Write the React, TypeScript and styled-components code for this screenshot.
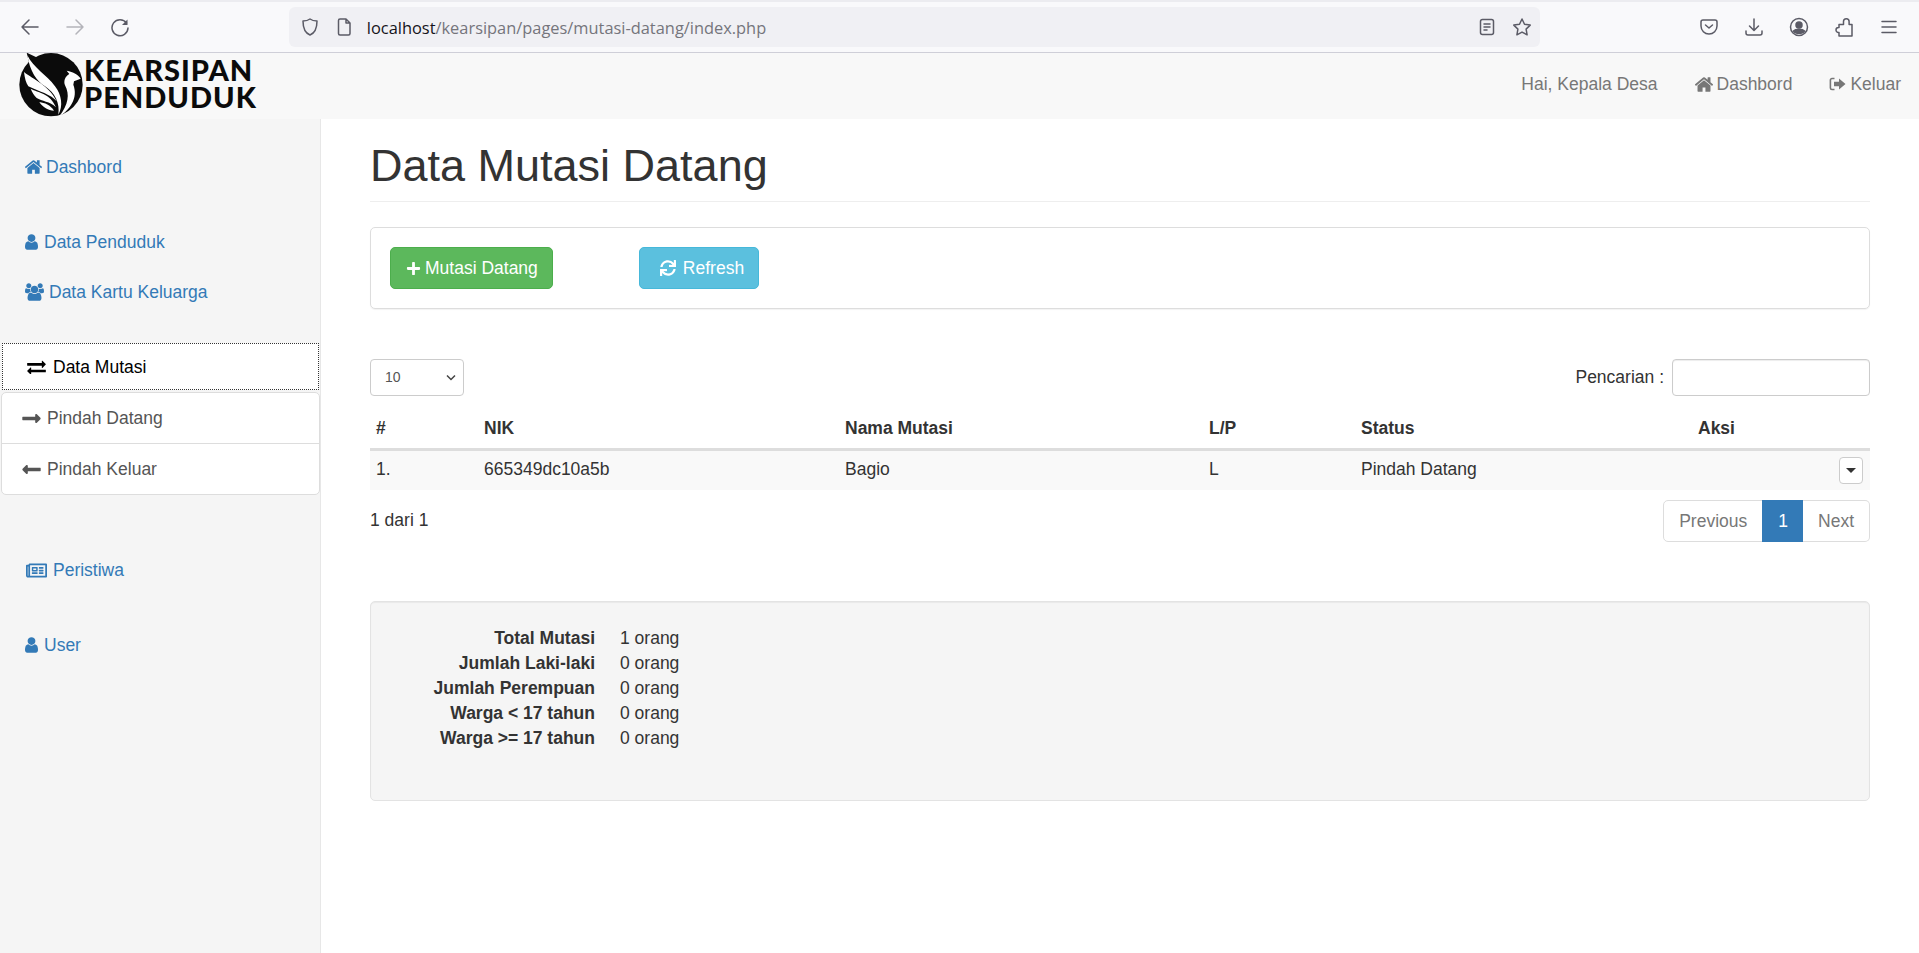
import React from "react";
import styled, { createGlobalStyle } from "styled-components";
import {
  FaLongArrowAltRight,
  FaLongArrowAltLeft,
  FaRegNewspaper,
  FaPlus,
  FaSync,
} from "react-icons/fa";

const GlobalStyle = createGlobalStyle`
  html, body {
    margin: 0;
    padding: 0;
    background: #fff;
    color: #333;
    font-family: "Liberation Sans", Arial, sans-serif;
    font-size: 17.5px;
    line-height: 25px;
  }
  * { box-sizing: border-box; }
`;

const Page = styled.div`
  width: 1919px;
  height: 953px;
  display: flex;
  flex-direction: column;
  overflow: hidden;
`;

/* browser chrome */
const Chrome = styled.div`
  height: 53px;
  flex: none;
  display: flex;
  align-items: center;
  background: #f9f9fb;
  border-top: 2px solid #ececf0;
  border-bottom: 1px solid #cfcfd8;
  padding: 0 20px 0 20px;
  color: #5b5b66;
`;

const ChromeIcon = styled.svg<{ $dim?: boolean }>`
  width: 20px;
  height: 20px;
  fill: none;
  stroke: ${(p) => (p.$dim ? "#b4b4ba" : "#5b5b66")};
  stroke-width: 1.5;
  stroke-linecap: round;
  stroke-linejoin: round;
  flex: none;
`;

const ChromeNav = styled.div`
  display: flex;
  gap: 25px;
  width: 269px;
`;

const UrlBar = styled.div`
  width: 1252px;
  height: 40px;
  background: #f0f0f4;
  border-radius: 6px;
  display: flex;
  align-items: center;
  gap: 15px;
  padding: 0 8px 0 11px;
`;

const UrlText = styled.div`
  margin-left: -3px;
  flex: 1;
  font-family: "Open Sans", sans-serif;
  font-size: 16.4px;
  white-space: nowrap;
  color: #15141a;
  span {
    color: #75757c;
  }
`;

const UrlIcons = styled.div`
  display: flex;
  gap: 15px;
`;

const ChromeRight = styled.div`
  margin-left: 159px;
  display: flex;
  gap: 25px;
`;

/* navbar */
const NavBar = styled.div`
  height: 66px;
  flex: none;
  display: flex;
  align-items: center;
  background: #f8f8f8;
  padding: 0 18px;
`;

const Logo = styled.div`
  display: flex;
  align-items: center;
  margin-right: auto;
`;

const LogoText = styled.div`
  font-family: "Lato", sans-serif;
  font-weight: 900;
  font-size: 29px;
  line-height: 27px;
  letter-spacing: 1px;
  margin-bottom: 6px;
  color: #0b0b0b;
`;

const NavItem = styled.div`
  display: flex;
  align-items: center;
  gap: 4px;
  color: #777;
  margin: 0 0 4px 37px;
`;

/* sidebar + content */
const Body = styled.div`
  flex: 1;
  display: flex;
  min-height: 0;
`;

const Sidebar = styled.div`
  width: 321px;
  flex: none;
  background: #f5f5f5;
  border-right: 1px solid #e7e7e7;
  padding-top: 23px;
`;

const SideGroup = styled.div<{ $gap: number }>`
  margin-bottom: ${(p) => p.$gap}px;
`;

const SideLink = styled.a<{ $gap?: number; $pad?: number }>`
  height: 50px;
  display: flex;
  align-items: center;
  gap: ${(p) => p.$gap ?? 4}px;
  padding-left: ${(p) => p.$pad ?? 25}px;
  color: #337ab7;
  svg {
    flex: none;
  }
`;

const ActiveLink = styled.a`
  height: 47px;
  margin: 0 1px 2px 2px;
  padding: 1px 0 0 24px;
  display: flex;
  align-items: center;
  gap: 7px;
  background: #fff;
  color: #000;
  border: 1px dotted #333;
`;

const SubPanel = styled.div`
  margin: 0 0 0 1px;
  background: #fff;
  border: 1px solid #ddd;
  border-radius: 5px;
`;

const SubLink = styled.a`
  height: 50px;
  display: flex;
  align-items: center;
  gap: 5px;
  padding-left: 19px;
  color: #555;
  & + & {
    border-top: 1px solid #ddd;
    height: 51px;
  }
`;

const Main = styled.div`
  flex: 1;
  padding: 22px 50px 0 49px;
`;

const Title = styled.h1`
  margin: 0;
  font-size: 45px;
  font-weight: 500;
  line-height: 50px;
  padding-bottom: 10px;
  border-bottom: 1px solid #eee;
`;

const ActionCard = styled.div`
  margin-top: 25px;
  height: 82px;
  border: 1px solid #ddd;
  border-radius: 5px;
  padding: 19px;
  display: flex;
  gap: 86px;
  box-shadow: 0 1px 1px rgba(0, 0, 0, 0.05);
`;

const Button = styled.a<{ $bg: string; $line: string; $gap: number }>`
  height: 42px;
  padding: 0 14px 0 15px;
  display: flex;
  align-items: center;
  gap: ${(p) => p.$gap}px;
  color: #fff;
  background: ${(p) => p.$bg};
  border: 1px solid ${(p) => p.$line};
  border-radius: 5px;
`;

const Controls = styled.div`
  margin-top: 50px;
  height: 37px;
  display: flex;
  align-items: center;
  justify-content: space-between;
`;

const PageSize = styled.div`
  width: 94px;
  height: 37px;
  border: 1px solid #ccc;
  border-radius: 4px;
  display: flex;
  align-items: center;
  justify-content: space-between;
  padding: 0 7px 0 14px;
  font-size: 14px;
  color: #555;
  svg {
    width: 10px;
    height: 7px;
  }
`;

const Search = styled.div`
  display: flex;
  align-items: center;
  gap: 8px;
`;

const SearchBox = styled.div`
  width: 198px;
  height: 37px;
  border: 1px solid #ccc;
  border-radius: 4px;
  box-shadow: inset 0 1px 1px rgba(0, 0, 0, 0.075);
`;

const Table = styled.table`
  width: 100%;
  table-layout: fixed;
  border-collapse: separate;
  border-spacing: 0;
`;

const Th = styled.th<{ $w: number }>`
  width: ${(p) => p.$w}px;
  height: 55px;
  padding: 12px 6px 0;
  text-align: left;
  font-weight: 700;
  border-bottom: 3px solid #ddd;
`;

const Row = styled.tr`
  background: #f9f9f9;
`;

const Td = styled.td`
  height: 39px;
  padding: 0 6px;
  vertical-align: top;
  line-height: 36px;
`;

const Caret = styled.div`
  width: 24px;
  height: 27px;
  margin: 6px 1px 0 auto;
  background: #fff;
  border: 1px solid #ccc;
  border-radius: 4px;
  display: flex;
  align-items: center;
  justify-content: center;
  &::after {
    content: "";
    border-top: 5px solid #333;
    border-left: 5px solid transparent;
    border-right: 5px solid transparent;
  }
`;

const TableFooter = styled.div`
  margin-top: 10px;
  display: flex;
  align-items: center;
  justify-content: space-between;
`;

const PageCount = styled.div`
  padding-bottom: 2px;
`;

const Pager = styled.div`
  display: flex;
  height: 42px;
`;

const PageLink = styled.a<{ $active?: boolean }>`
  display: flex;
  align-items: center;
  padding: 0 15px;
  color: ${(p) => (p.$active ? "#fff" : "#777")};
  background: ${(p) => (p.$active ? "#337ab7" : "#fff")};
  border: 1px solid ${(p) => (p.$active ? "#337ab7" : "#ddd")};
  &:first-child {
    border-radius: 5px 0 0 5px;
  }
  &:last-child {
    border-radius: 0 5px 5px 0;
    border-left: 0;
  }
  & + & {
    margin-left: -1px;
  }
`;

const Well = styled.div`
  margin-top: 59px;
  height: 200px;
  background: #f5f5f5;
  border: 1px solid #e3e3e3;
  border-radius: 5px;
  box-shadow: inset 0 1px 1px rgba(0, 0, 0, 0.05);
  padding: 24px 0 0;
  display: grid;
  grid-template-columns: 224px auto;
  grid-auto-rows: 25px;
  column-gap: 25px;
  justify-content: start;
`;

const WellLabel = styled.div`
  font-weight: 700;
  text-align: right;
`;

const WellValue = styled.div``;

const stats = [
  ["Total Mutasi", "1 orang"],
  ["Jumlah Laki-laki", "0 orang"],
  ["Jumlah Perempuan", "0 orang"],
  ["Warga < 17 tahun", "0 orang"],
  ["Warga >= 17 tahun", "0 orang"],
];

/* font awesome 4 shapes */
const HOME = "M1472 992v480q0 26-19 45t-45 19h-384v-384h-256v384h-384q-26 0-45-19t-19-45v-480q0-1 .5-3t.5-3l575-474 575 474q1 2 1 6zm223-69l-62 74q-8 9-21 11h-3q-13 0-21-7l-692-577-692 577q-12 8-24 7-13-2-21-11l-62-74q-8-10-7-23.5t11-20.5l719-599q32-26 76-26t76 26l244 204v-195q0-14 9-23t23-9h192q14 0 23 9t9 23v408l219 182q10 8 11 21.5t-7 23.5z";
const USER = "M1536 1399q0 109-62.5 187t-150.5 78h-854q-88 0-150.5-78t-62.5-187q0-85 8.500-160.5t31.5-152 58.5-131 94-89 134.5-34.5q131 128 313 128t313-128q76 0 134.5 34.5t94 89 58.5 131 31.5 152 8.500 160.5zm-256-887q0 159-112.5 271.5t-271.5 112.5-271.5-112.5-112.5-271.5 112.5-271.5 271.5-112.5 271.5 112.5 112.5 271.500z";
const USERS = "M593 896q-162 5-265 128h-134q-82 0-138-40.5t-56-118.5q0-353 124-353 6 0 43.5 21t97.5 42.5 119 21.5q67 0 133-23-5 37-5 66 0 139 81 256zm1071 637q0 120-73 189.5t-194 69.5h-874q-121 0-194-69.5t-73-189.5q0-53 3.5-103.5t14-109 26.5-108.5 43-97.5 62-81 85.5-53.5 111.5-20q10 0 43 21.5t73 48 107 48 135 21.5 135-21.5 107-48 73-48 43-21.5q61 0 111.5 20t85.5 53.5 62 81 43 97.5 26.5 108.5 14 109 3.5 103.5zm-1024-1277q0 106-75 181t-181 75-181-75-75-181 75-181 181-75 181 75 75 181zm704 384q0 159-112.5 271.5t-271.5 112.5-271.5-112.5-112.5-271.5 112.5-271.5 271.5-112.5 271.5 112.5 112.5 271.5zm576 225q0 78-56 118.5t-138 40.5h-134q-103-123-265-128 81-117 81-256 0-29-5-66 66 23 133 23 59 0 119-21.5t97.5-42.5 43.5-21q124 0 124 353zm-128-609q0 106-75 181t-181 75-181-75-75-181 75-181 181-75 181 75 75 181z";
const EXCHANGE = "M1792 1184v192q0 13-9.5 22.5t-22.5 9.5h-1376v192q0 13-9.5 22.5t-22.5 9.5q-12 0-24-10l-319-320q-9-9-9-22 0-14 9-23l320-320q9-9 23-9 13 0 22.5 9.5t9.5 22.5v192h1376q13 0 22.5 9.5t9.5 22.5zm0-544q0 14-9 23l-320 320q-9 9-23 9-13 0-22.5-9.5t-9.5-22.5v-192h-1376q-13 0-22.5-9.5t-9.5-22.5v-192q0-13 9.5-22.5t22.5-9.5h1376v-192q0-14 9-23t23-9q12 0 24 10l319 319q9 9 9 23z";

const FaShape = ({ d, box, w, h }: { d: string; box: string; w: number; h: number }) => (
  <svg width={w} height={h} viewBox={box} fill="currentColor"><path d={d} /></svg>
);

const Phoenix = () => (
  <svg width="66" height="66" viewBox="24 15 198 198">
    <circle cx="123" cy="110" r="95" fill="#0b0b0b" />
    <path d="M50 14 L84 30 L58 48Z" fill="#0b0b0b" />
    <path d="M52 22C70 60 110 80 135 115C155 140 160 175 145 200C150 165 135 135 105 115C80 100 60 70 52 22Z" fill="#fff" />
    <path d="M42 72C70 95 115 110 140 160C125 140 85 130 55 115C48 105 44 90 42 72Z" fill="#fff" />
    <path d="M62 122C85 135 120 135 138 178C120 160 95 160 80 150C72 142 66 132 62 122Z" fill="#fff" />
    <path d="M88 162C105 165 120 170 132 188C115 188 98 178 88 162Z" fill="#fff" />
    <path d="M148 205C180 185 205 150 190 110L192 100L212 92C205 80 190 72 170 68L178 78C165 85 160 100 165 112C180 140 175 170 148 205Z" fill="#fff" />
  </svg>
);

const SignOut = () => (
  <svg width="17" height="16" viewBox="0 0 17 16" fill="none">
    <path d="M5.500 2.500H3a1.600 1.600 0 0 0-1.600 1.600v7.800A1.600 1.600 0 0 0 3 13.500h2.500" stroke="#777" strokeWidth="1.600" />
    <path d="M10 2.500 16.500 8 10 13.500V10.300H5V5.700h5Z" fill="#777" />
  </svg>
);

const App = () => (
  <Page>
    <GlobalStyle />
    <Chrome>
      <ChromeNav>
        <ChromeIcon viewBox="0 0 20 20"><path d="M18 10H2M9 3l-7 7 7 7" /></ChromeIcon>
        <ChromeIcon viewBox="0 0 20 20" $dim><path d="M2 10h16M11 3l7 7-7 7" /></ChromeIcon>
        <ChromeIcon viewBox="0 0 20 20">
          <path d="M16.500 6A8 8 0 1 0 18 11" />
          <path d="M17.500 2.500V8H12Z" fill="#5b5b66" stroke="none" />
        </ChromeIcon>
      </ChromeNav>
      <UrlBar>
        <ChromeIcon viewBox="0 0 20 20"><path d="M10 2c2 1.500 4.500 2 7 2 0 7-2 12-7 14C5 16 3 11 3 4c2.500 0 5-.5 7-2Z" /></ChromeIcon>
        <ChromeIcon viewBox="0 0 20 20"><path d="M5 2h6l4 4v10.500a1.500 1.500 0 0 1-1.500 1.500h-8.500a1.500 1.500 0 0 1-1.500-1.500v-13a1.500 1.500 0 0 1 1.500-1.500ZM11 2v4h4" /></ChromeIcon>
        <UrlText>localhost<span>/kearsipan/pages/mutasi-datang/index.php</span></UrlText>
        <UrlIcons>
          <ChromeIcon viewBox="0 0 20 20"><rect x="3.500" y="2.500" width="13" height="15" rx="2" /><path d="M7 7h6M7 10h6M7 13h3" /></ChromeIcon>
          <ChromeIcon viewBox="0 0 20 20"><path d="m10 2 2.500 5.300 5.700.8-4.100 4 1 5.700L10 15.100l-5.100 2.700 1-5.700-4.100-4 5.700-.8Z" /></ChromeIcon>
        </UrlIcons>
      </UrlBar>
      <ChromeRight>
        <ChromeIcon viewBox="0 0 20 20"><path d="M4 3h12a2 2 0 0 1 2 2v4a8 8 0 0 1-16 0V5a2 2 0 0 1 2-2ZM6.500 8l3.500 3 3.500-3" /></ChromeIcon>
        <ChromeIcon viewBox="0 0 20 20"><path d="M10 2v11M5.500 9l4.500 4.500L14.500 9M2 14v2a2 2 0 0 0 2 2h12a2 2 0 0 0 2-2v-2" /></ChromeIcon>
        <ChromeIcon viewBox="0 0 20 20"><circle cx="10" cy="10" r="8.500" /><circle cx="10" cy="8" r="3" fill="#5b5b66" /><path d="M4.500 14c2-2.500 9-2.500 11 0-2 3-9 3-11 0Z" fill="#5b5b66" /></ChromeIcon>
        <ChromeIcon viewBox="0 0 20 20"><path d="M9.500 7.500V4.500a2.800 2.800 0 0 1 5.600 0v3H18V19H5v-3.500H4.500a2.500 2.500 0 0 1 0-5H5V7.500Z" /></ChromeIcon>
        <ChromeIcon viewBox="0 0 20 20"><path d="M3 4.500h14M3 10h14M3 15.500h14" /></ChromeIcon>
      </ChromeRight>
    </Chrome>

    <NavBar>
      <Logo>
        <Phoenix />
        <LogoText>KEARSIPAN<br />PENDUDUK</LogoText>
      </Logo>
      <NavItem>Hai, Kepala Desa</NavItem>
      <NavItem><FaShape d={HOME} box="96 256 1600 1280" w={18} h={15} />Dashbord</NavItem>
      <NavItem><SignOut />Keluar</NavItem>
    </NavBar>

    <Body>
      <Sidebar>
        <SideGroup $gap={25}>
          <SideLink $gap={4}><FaShape d={HOME} box="96 256 1600 1280" w={17} h={14} />Dashbord</SideLink>
        </SideGroup>
        <SideGroup $gap={26}>
          <SideLink $gap={6}><FaShape d={USER} box="256 128 1280 1536" w={13} h={16} />Data Penduduk</SideLink>
          <SideLink $gap={5}><FaShape d={USERS} box="0 0 1920 1792" w={19} h={18} />Data Kartu Keluarga</SideLink>
        </SideGroup>
        <SideGroup $gap={50}>
          <ActiveLink><FaShape d={EXCHANGE} box="0 224 1792 1344" w={19} h={14} />Data Mutasi</ActiveLink>
          <SubPanel>
            <SubLink><FaLongArrowAltRight size={21} />Pindah Datang</SubLink>
            <SubLink><FaLongArrowAltLeft size={21} />Pindah Keluar</SubLink>
          </SubPanel>
        </SideGroup>
        <SideGroup $gap={25}>
          <SideLink $gap={6} $pad={26}><FaRegNewspaper size={21} />Peristiwa</SideLink>
        </SideGroup>
        <SideGroup $gap={0}>
          <SideLink $gap={6}><FaShape d={USER} box="256 128 1280 1536" w={13} h={16} />User</SideLink>
        </SideGroup>
      </Sidebar>

      <Main>
        <Title>Data Mutasi Datang</Title>
        <ActionCard>
          <Button $bg="#5cb85c" $line="#4cae4c" $gap={4}><FaPlus size={15} />Mutasi Datang</Button>
          <Button $bg="#5bc0de" $line="#46b8da" $gap={7}><FaSync size={16} style={{ marginLeft: 5 }} />Refresh</Button>
        </ActionCard>

        <Controls>
          <PageSize>
            10
            <svg viewBox="0 0 10 7" fill="none"><path d="M1 1.500 5 5.500l4-4" stroke="#444" strokeWidth="1.500" /></svg>
          </PageSize>
          <Search>Pencarian :<SearchBox /></Search>
        </Controls>

        <Table>
          <thead>
            <tr>
              <Th $w={108}>#</Th>
              <Th $w={361}>NIK</Th>
              <Th $w={364}>Nama Mutasi</Th>
              <Th $w={152}>L/P</Th>
              <Th $w={337}>Status</Th>
              <Th $w={178}>Aksi</Th>
            </tr>
          </thead>
          <tbody>
            <Row>
              <Td>1.</Td>
              <Td>665349dc10a5b</Td>
              <Td>Bagio</Td>
              <Td>L</Td>
              <Td>Pindah Datang</Td>
              <Td><Caret /></Td>
            </Row>
          </tbody>
        </Table>

        <TableFooter>
          <PageCount>1 dari 1</PageCount>
          <Pager>
            <PageLink>Previous</PageLink>
            <PageLink $active>1</PageLink>
            <PageLink>Next</PageLink>
          </Pager>
        </TableFooter>

        <Well>
          {stats.map(([label, value]) => (
            <React.Fragment key={label}>
              <WellLabel>{label}</WellLabel>
              <WellValue>{value}</WellValue>
            </React.Fragment>
          ))}
        </Well>
      </Main>
    </Body>
  </Page>
);

export default App;
